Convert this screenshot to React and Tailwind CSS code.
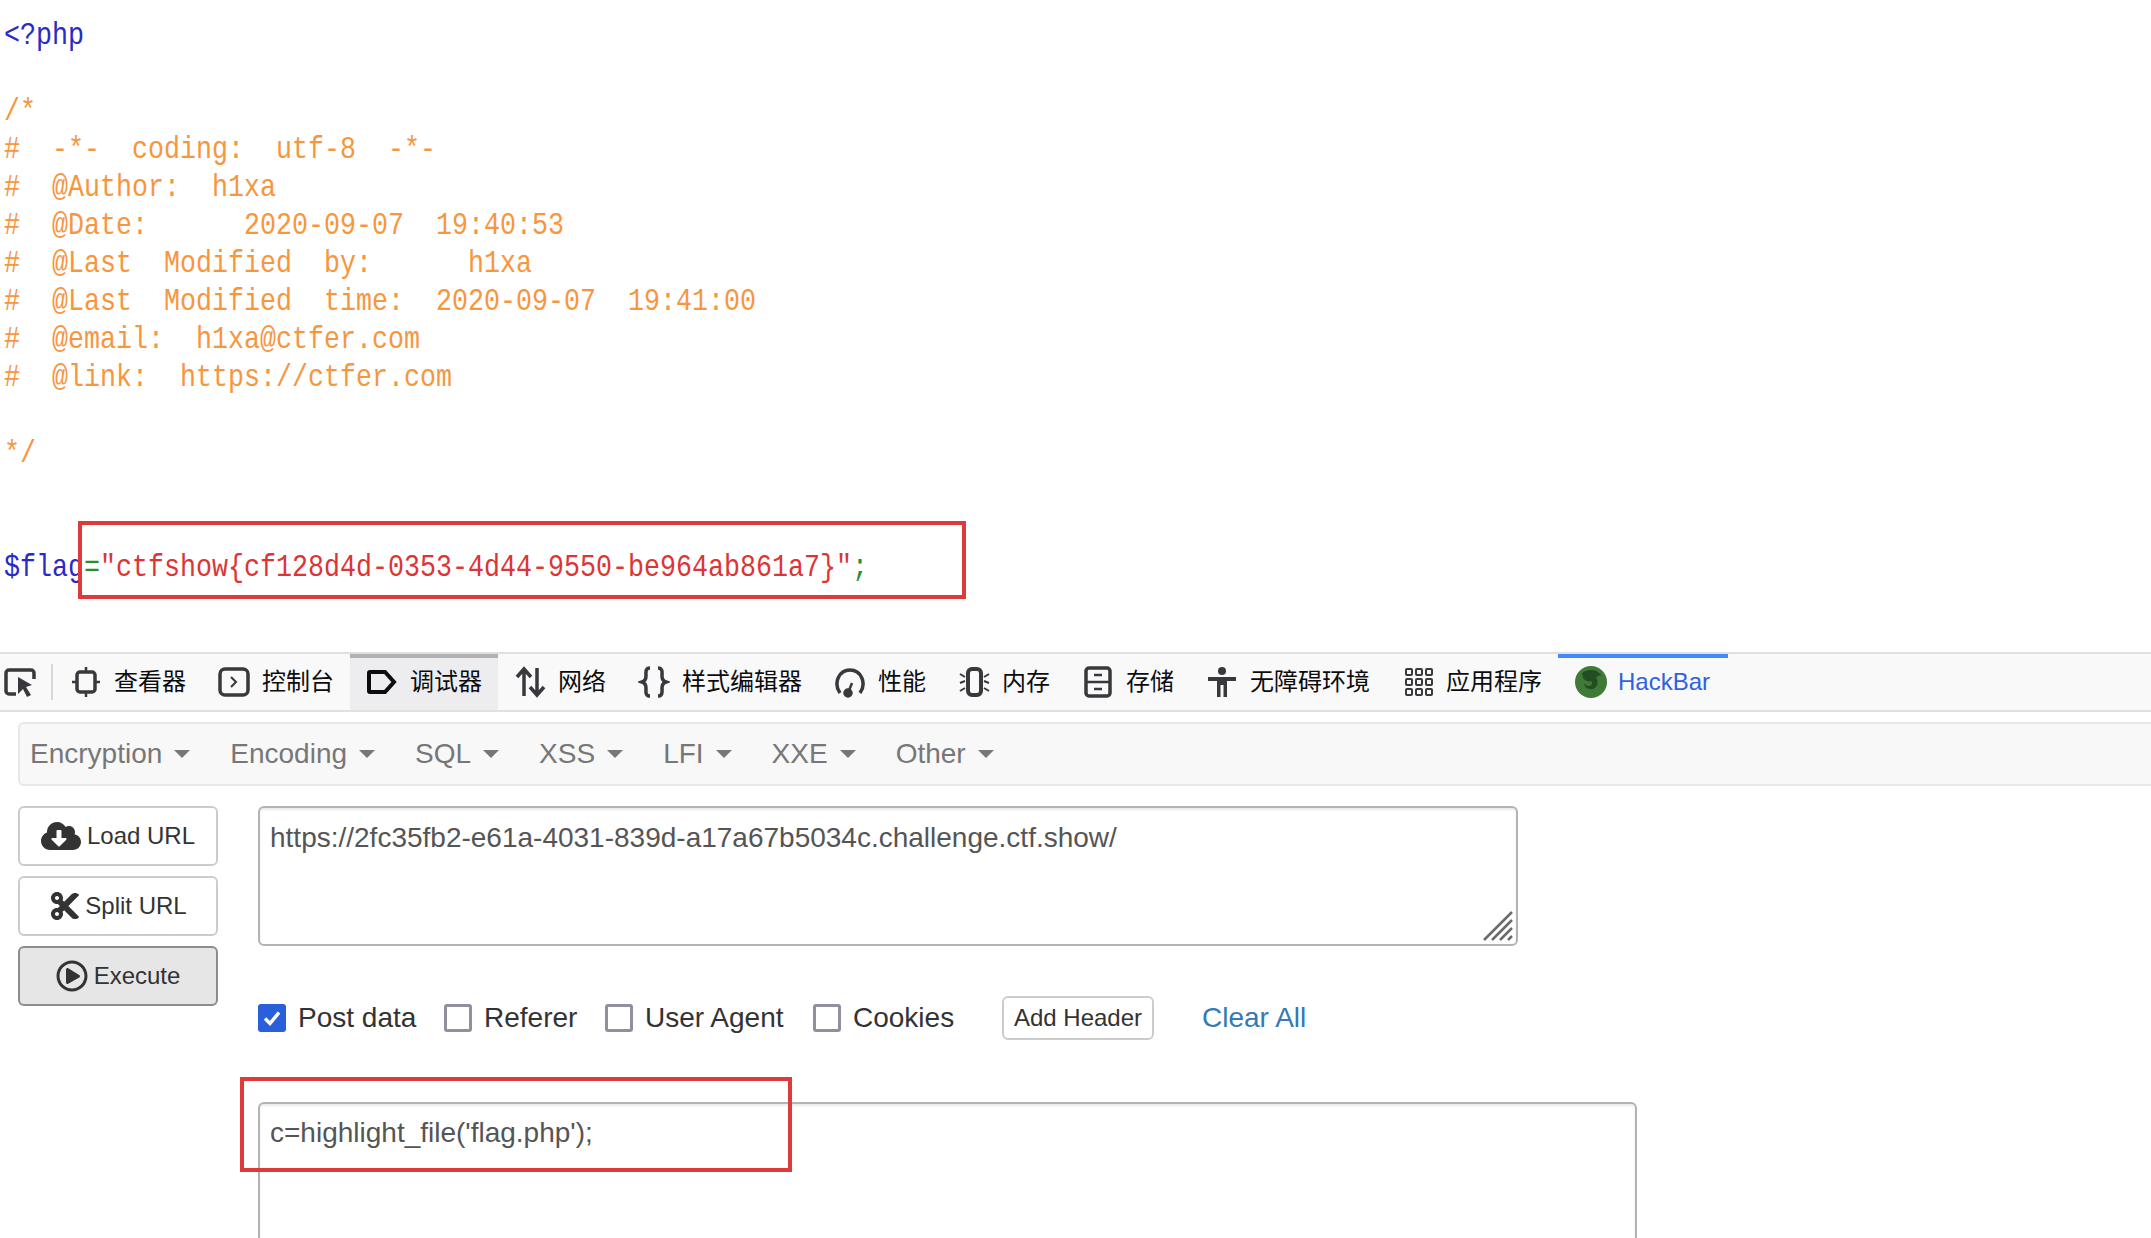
import React from "react";
import { FaCloudDownloadAlt, FaCut, FaRegPlayCircle } from "react-icons/fa";

const cjk = "font-['Liberation_Sans','Noto_Sans_CJK_SC',sans-serif]";

const Ico = ({ children, w = 32, cls = "" }) => (
  <svg width={w} height="32" viewBox="0 0 32 32" fill="none" stroke="#38383d" strokeWidth="3.500" className={"shrink-0 " + cls}>
    {children}
  </svg>
);

const icons = {
  inspector: (
    <>
      <rect x="7" y="6" width="18" height="20" rx="3" />
      <path d="M16 1v5M16 26v5M2 16h5M25 16h5" strokeWidth="2.5" />
    </>
  ),
  console: (
    <>
      <rect x="2" y="3" width="28" height="26" rx="5" />
      <path d="M13 11l5 5-5 5" strokeWidth="2" />
    </>
  ),
  debugger: <path d="M4 6h15l9 10-9 10H4a1 1 0 0 1-1-1V7a1 1 0 0 1 1-1z" stroke="#0c0c0d" strokeWidth="4" />,
  network: (
    <>
      <path d="M10 30V4M3 11l7-8 7 8" />
      <path d="M23 2v26M16 21l7 8 7-8" />
    </>
  ),
  style: (
    <>
      <path d="M12 2c-5 0-4 5-4 8s-1 5-4 6c3 1 4 3 4 6s-1 8 4 8" />
      <path d="M20 2c5 0 4 5 4 8s1 5 4 6c-3 1-4 3-4 6s1 8-4 8" />
    </>
  ),
  perf: (
    <>
      <path d="M6 27C-1 17 5 4 16 4s17 13 10 23" />
      <path d="M14 27l4-10" strokeWidth="2.5" />
      <circle cx="14" cy="27" r="3" fill="#38383d" />
    </>
  ),
  memory: (
    <>
      <rect x="10" y="3" width="13" height="26" rx="4" strokeWidth="4" />
      <path d="M2 8l5 3M7 15l-5 2M2 25l5-3M31 8l-5 3M26 15l5 2M31 25l-5-3" strokeWidth="2" />
    </>
  ),
  storage: (
    <>
      <rect x="4" y="2" width="24" height="28" rx="3" strokeWidth="3.500" />
      <path d="M4 16h24M12 9h8M12 23h8" strokeWidth="2.5" />
    </>
  ),
  access: (
    <>
      <circle cx="16" cy="5" r="4" fill="#38383d" stroke="none" />
      <path d="M2 11h28v4h-9v16h-3.500v-12h-3v12H11V15H2z" fill="#38383d" stroke="none" />
    </>
  ),
  apps: (
    <g strokeWidth="2">
      {[3, 13, 23].map((y) =>
        [3, 13, 23].map((x) => <rect key={x + "-" + y} x={x + 1} y={y} width="6" height="6" rx="1" />)
      )}
    </g>
  ),
};

const tabs = [
  ["inspector", "查看器"],
  ["console", "控制台"],
  ["debugger", "调试器", true],
  ["network", "网络"],
  ["style", "样式编辑器"],
  ["perf", "性能"],
  ["memory", "内存"],
  ["storage", "存储"],
  ["access", "无障碍环境"],
  ["apps", "应用程序"],
];

const Tab = ({ icon, label, active }) => (
  <div
    className={
      "flex h-full items-center gap-3 px-4 pb-1 border-t-4 " +
      (active ? "bg-[#ededf0] border-[#b1b1b3]" : "border-transparent")
    }
  >
    <Ico>{icons[icon]}</Ico>
    <span className="text-2xl leading-8 text-[#0c0c0d]">{label}</span>
  </div>
);

const Menu = ({ label }) => (
  <div className="flex items-center gap-3 pr-10">
    <span>{label}</span>
    <span className="h-0 w-0 border-x-8 border-t-8 border-x-transparent border-t-[#777777]" />
  </div>
);

const SideButton = ({ icon, label, active, gap = "gap-1.5" }) => (
  <div
    className={
      "flex h-[60px] w-[200px] items-center justify-center rounded-md border-2 text-2xl text-[#333333] " +
      gap +
      " " +
      (active ? "bg-[#e6e6e6] border-[#8c8c8c]" : "bg-white border-[#cccccc]")
    }
  >
    {icon}
    <span>{label}</span>
  </div>
);

const Check = ({ label, checked, cls }) => (
  <div className={"flex items-center gap-3 " + cls}>
    {checked ? (
      <span className="flex h-7 w-7 items-center justify-center rounded-[3px] bg-[#2a5fdc]">
        <svg width="20" height="20" viewBox="0 0 20 20" fill="none" stroke="#ffffff" strokeWidth="3.500">
          <path d="M3 10.500l5 5 9-11" />
        </svg>
      </span>
    ) : (
      <span className="h-7 w-7 rounded-[3px] border-[3px] border-[#8f8f9d] bg-white" />
    )}
    <span>{label}</span>
  </div>
);

const Comment = ({ children }) => <div className="text-[#f7963f]">{children || "\u00a0"}</div>;

export default function App() {
  return (
    <div className={"relative h-[1238px] w-[2151px] overflow-hidden bg-white " + cjk}>
      {/* source listing */}
      <div className="h-[652px] overflow-hidden pl-1 pt-[17px]">
        <div className="w-[1800px] origin-top-left scale-x-[0.8333] whitespace-pre font-['Liberation_Mono',monospace] text-[32px] leading-[38px]">
          <div className="text-[#2a2ac4]">{"<?php"}</div>
          <div>{"\u00a0"}</div>
          <Comment>{"/*"}</Comment>
          <Comment>{"#  -*-  coding:  utf-8  -*-"}</Comment>
          <Comment>{"#  @Author:  h1xa"}</Comment>
          <Comment>{"#  @Date:      2020-09-07  19:40:53"}</Comment>
          <Comment>{"#  @Last  Modified  by:      h1xa"}</Comment>
          <Comment>{"#  @Last  Modified  time:  2020-09-07  19:41:00"}</Comment>
          <Comment>{"#  @email:  h1xa@ctfer.com"}</Comment>
          <Comment>{"#  @link:  https://ctfer.com"}</Comment>
          <div>{"\u00a0"}</div>
          <Comment>{"*/"}</Comment>
          <div>{"\u00a0"}</div>
          <div>{"\u00a0"}</div>
          <div>
            <span className="text-[#2a2ac4]">$flag</span>
            <span className="text-[#2e8b2e]">=</span>
            <span className="text-[#dc3535]">{'"ctfshow{cf128d4d-0353-4d44-9550-be964ab861a7}"'}</span>
            <span className="text-[#2e8b2e]">;</span>
          </div>
        </div>
      </div>

      {/* devtools tab bar */}
      <div className="flex h-[60px] items-stretch border-y-2 border-[#e0e0e2] bg-[#f9f9fa]">
        <div className="flex w-[54px] items-center pl-1">
          <svg width="32" height="32" viewBox="0 0 32 32" fill="none" className="shrink-0">
            <path d="M12 28H5a3 3 0 0 1-3-3V7a3 3 0 0 1 3-3h22a3 3 0 0 1 3 3v6" stroke="#38383d" strokeWidth="3.500" />
            <path d="M14 11l14 8-6 2 5 8-4 2-4-8-5 5z" fill="#38383d" />
          </svg>
          <span className="ml-[15px] h-9 w-0.5 bg-[#d7d7db]" />
        </div>
        {tabs.map(([i, l, a]) => (
          <Tab key={i} icon={i} label={l} active={a} />
        ))}
        <div className="flex h-full w-[170px] items-center gap-[10px] border-t-4 border-[#4488ff] pb-1 pl-4">
          <svg width="34" height="34" viewBox="0 0 34 34" className="shrink-0">
            <circle cx="17" cy="17" r="16" fill="#3f7a36" />
            <path d="M8 8c6-5 16-4 20 3-3-1-5 0-6 2 3 3 2 9-3 11-5 1-9-2-9-6 1 2 3 3 5 3 3 0 4-3 2-5-4 1-8 0-9-8z" fill="#234d22" />
          </svg>
          <span className="text-2xl text-[#2f62de]">HackBar</span>
        </div>
      </div>

      {/* hackbar */}
      <div className="pl-[18px] pt-[10px]">
        <div className="flex h-16 items-center rounded-l-md border-y-2 border-l-2 border-[#e7e7e7] bg-[#f8f8f8] pl-[10px] text-[28px] text-[#777777]">
          <Menu label="Encryption" />
          <Menu label="Encoding" />
          <Menu label="SQL" />
          <Menu label="XSS" />
          <Menu label="LFI" />
          <Menu label="XXE" />
          <Menu label="Other" />
        </div>

        <div className="mt-5 flex gap-10">
          <div className="flex flex-col gap-[10px]">
            <SideButton icon={<FaCloudDownloadAlt size={40} />} label="Load URL" />
            <SideButton icon={<FaCut size={32} />} label="Split URL" gap="gap-1" />
            <SideButton icon={<FaRegPlayCircle size={32} />} label="Execute" active />
          </div>

          <div className="flex-1">
            <div className="relative h-[140px] w-[1260px] rounded-md border-2 border-[#b3b3b3] px-[10px] pt-[10px] text-[28px] leading-10 text-[#555555] shadow-[inset_0_2px_2px_rgba(0,0,0,0.08)]">
              https://2fc35fb2-e61a-4031-839d-a17a67b5034c.challenge.ctf.show/
              <svg width="32" height="32" viewBox="0 0 32 32" stroke="#6b6b6b" strokeWidth="2.500" className="absolute bottom-0.5 right-0.5">
                <path d="M2 30L30 2M10 30L30 10M18 30L30 18M26 30L30 26" />
              </svg>
            </div>

            <div className="mt-[50px] flex h-11 items-center text-[28px] text-[#333333]">
              <Check label="Post data" checked cls="w-[186px]" />
              <Check label="Referer" cls="w-[161px]" />
              <Check label="User Agent" cls="w-[208px]" />
              <Check label="Cookies" cls="w-[189px]" />
              <div className="flex h-11 w-[152px] items-center justify-center rounded-md border-2 border-[#cccccc] text-2xl">
                Add Header
              </div>
              <span className="ml-12 text-[#337ab7]">Clear All</span>
            </div>

            <div className="mt-[62px] h-[300px] w-[1379px] rounded-md border-2 border-[#b3b3b3] px-[10px] pt-[9px] text-[28px] leading-10 text-[#555555] shadow-[inset_0_2px_2px_rgba(0,0,0,0.08)]">
              {"c=highlight_file('flag.php');"}
            </div>
          </div>
        </div>
      </div>

      {/* annotation rectangles */}
      <div className="absolute left-[78px] top-[521px] h-[78px] w-[888px] border-4 border-[#df3a3a]" />
      <div className="absolute left-[240px] top-[1077px] h-[95px] w-[552px] border-4 border-[#df3a3a]" />
    </div>
  );
}
